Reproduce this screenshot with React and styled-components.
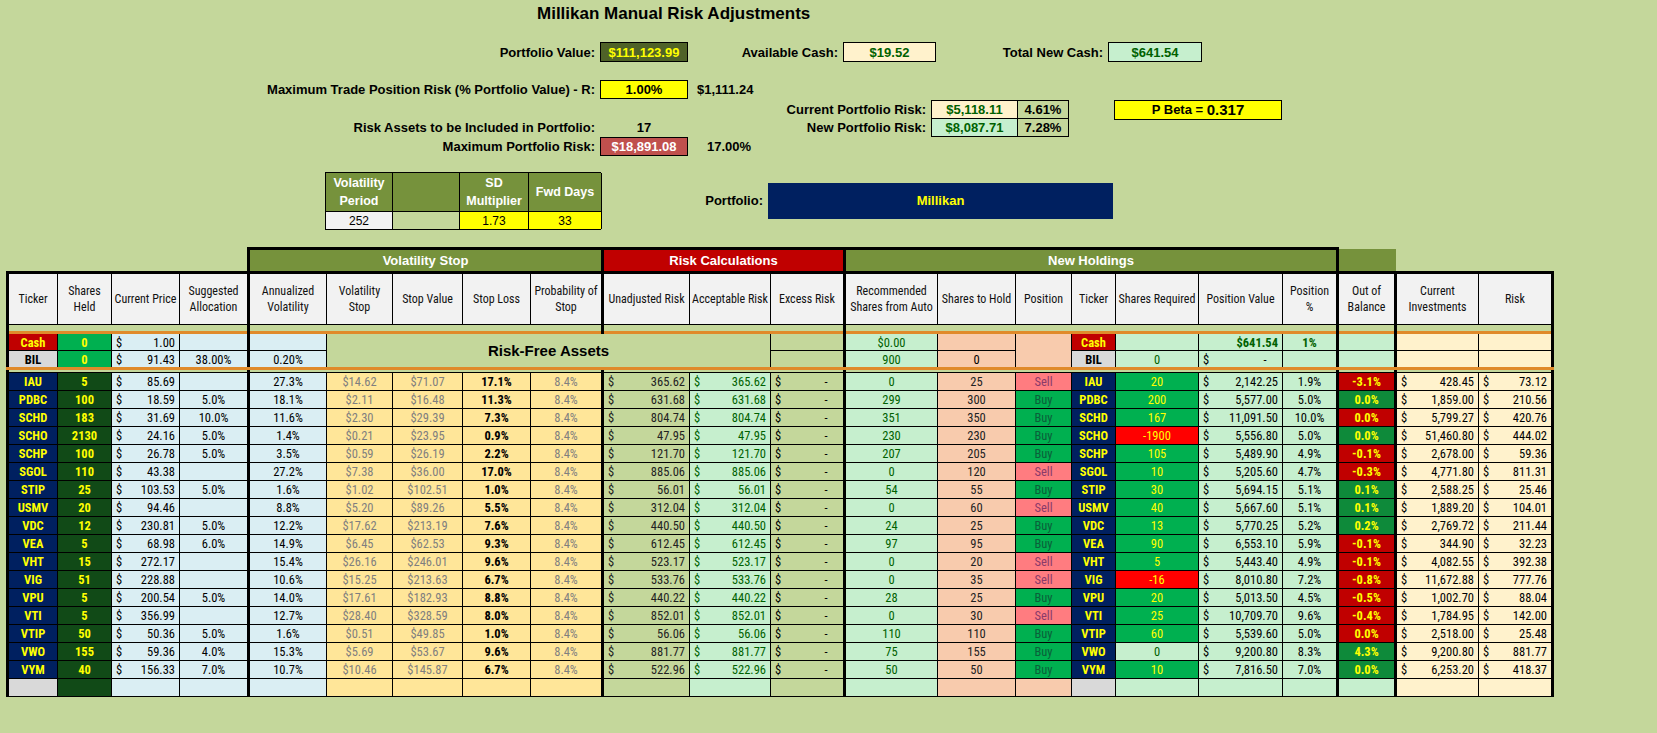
import React from "react";
import styled, { createGlobalStyle } from "styled-components";

const Global = createGlobalStyle`
  html, body { margin: 0; padding: 0; background: #c4d79b; }
  body { font-family: "Liberation Sans", Arial, sans-serif; }
`;

const Page = styled.div`
  width: 1657px;
  height: 733px;
  overflow: hidden;
  background: #c4d79b;
`;

const Title = styled.div`
  height: 28px;
  padding-left: 537px;
  display: flex;
  align-items: center;
  font-weight: bold;
  font-size: 17px;
  color: #000;
`;

const Row = styled.div`
  display: flex;
  align-items: center;
  height: ${(p) => p.$h || 19}px;
  margin-top: ${(p) => p.$mt || 0}px;
`;

const Label = styled.div`
  width: ${(p) => p.$w}px;
  flex: none;
  text-align: right;
  padding-right: 5px;
  box-sizing: border-box;
  font-weight: bold;
  font-size: 13px;
  white-space: nowrap;
`;

const Box = styled.div`
  width: ${(p) => p.$w}px;
  height: ${(p) => p.$h || 19}px;
  flex: none;
  box-sizing: border-box;
  border: ${(p) => (p.$noborder ? "none" : "1px solid #000")};
  background: ${(p) => p.$bg || "transparent"};
  color: ${(p) => p.$c || "#000"};
  display: flex;
  align-items: center;
  justify-content: center;
  font-weight: bold;
  font-size: ${(p) => p.$fs || 13}px;
  margin-left: ${(p) => p.$ml || 0}px;
`;

const Plain = styled.div`
  font-weight: bold;
  font-size: 13px;
  padding-left: ${(p) => p.$pl || 0}px;
`;

const Spacer = styled.div`
  width: ${(p) => p.$w}px;
  flex: none;
`;

const Stack = styled.div`
  display: flex;
  flex-direction: column;
`;

const VolGrid = styled.div`
  display: grid;
  grid-template-columns: 67px 67px 69px 73px;
  grid-template-rows: 39px 17px;
  width: 276px;
  box-sizing: border-box;
  border: 1px solid #000;
  align-self: flex-start;
`;

const VolHead = styled.div`
  background: #76923c;
  color: #fff;
  font-weight: bold;
  font-size: 12.5px;
  display: flex;
  align-items: center;
  justify-content: center;
  text-align: center;
  line-height: 18px;
  border-right: 1px solid #000;
  border-bottom: 1px solid #000;
`;

const VolVal = styled.div`
  background: ${(p) => p.$bg};
  font-size: 12px;
  display: flex;
  align-items: center;
  justify-content: center;
  border-right: 1px solid #000;
`;

const Navy = styled.div`
  width: 345px;
  height: 36px;
  background: #002060;
  color: #ffff00;
  font-weight: bold;
  font-size: 13px;
  display: flex;
  align-items: center;
  justify-content: center;
  align-self: flex-start;
  margin-top: 1px;
`;

const Table = styled.table`
  border-collapse: collapse;
  table-layout: fixed;
  margin-left: 6px;
  margin-top: 18px;
  font-family: "Liberation Sans Narrow", "Roboto Condensed", "Liberation Sans", sans-serif;
  font-size: 12.5px;
`;

const GroupTh = styled.th`
  height: 21px;
  padding: 0;
  background: ${(p) => p.$bg || "transparent"};
  color: #fff;
  font-family: "Liberation Sans", Arial, sans-serif;
  font-size: 13px;
  font-weight: bold;
  border-top: ${(p) => (p.$top ? "3px solid #000" : "none")};
  border-left: ${(p) => (p.$tl ? "3px solid #000" : "none")};
  border-right: ${(p) => (p.$tr ? "3px solid #000" : "none")};
`;

const HeadTh = styled.th`
  height: 50px;
  padding: 0 2px;
  background: #f2f2f2;
  font-weight: normal;
  font-size: 12px;
  line-height: 16px;
  color: #111;
  border: 1px solid #000;
  border-top: 3px solid #000;
  border-left: ${(p) => (p.$tl ? "3px solid #000" : "1px solid #000")};
  border-right: ${(p) => (p.$tr ? "3px solid #000" : "1px solid #000")};
`;

const Tr = styled.tr`
  height: ${(p) => p.$h}px;
`;

const Td = styled.td`
  padding: 0 4px;
  height: ${(p) => (p.$nb ? "auto" : "16px")};
  background: ${(p) => p.$bg || "transparent"};
  color: ${(p) => p.$c || "#000"};
  font-weight: ${(p) => (p.$b ? "bold" : "normal")};
  font-size: ${(p) => p.$fs || 12.5}px;
  text-align: ${(p) => p.$al || "center"};
  white-space: nowrap;
  border: ${(p) => (p.$nb ? "none" : "1px solid #000")};
  border-left: ${(p) => (p.$tl ? "3px solid #000" : p.$nb ? "none" : "1px solid #000")};
  border-right: ${(p) => (p.$tr ? "3px solid #000" : p.$nb ? "none" : "1px solid #000")};
  border-top: ${(p) => (p.$ot ? "3px solid #e08a2a" : p.$nb ? "none" : "1px solid #000")};
  border-bottom: ${(p) => (p.$ob ? "3px solid #e08a2a" : p.$nb ? "none" : "1px solid #000")};
  line-height: 15px;
`;

const Money = styled.span`
  display: flex;
  justify-content: space-between;
`;

const widths = [50, 54, 68, 69, 78, 66, 70, 68, 72, 87, 81, 74, 93, 78, 56, 44, 83, 84, 55, 58, 83, 74];
const thickLeft = new Set([0, 4, 9, 12, 19, 20]);

const headers = [
  "Ticker", "Shares Held", "Current Price", "Suggested Allocation", "Annualized Volatility",
  "Volatility Stop", "Stop Value", "Stop Loss", "Probability of Stop", "Unadjusted Risk",
  "Acceptable Risk", "Excess Risk", "Recommended Shares from Auto", "Shares to Hold", "Position",
  "Ticker", "Shares Required", "Position Value", "Position %", "Out of Balance",
  "Current Investments", "Risk",
];

const C = {
  navy: "#002060", yel: "#ffff00", dk: "#114a17", blue: "#daeef3", peach: "#ffe699",
  olive: "#c4d79b", lg: "#c6efce", dg: "#006100", sh: "#f8cbad", buy: "#00b050",
  sell: "#ff7c80", red: "#ff0000", dred: "#c00000", ok: "#0e8a3a", ly: "#fff2cc",
};

const data = [
  ["IAU", "5", "85.69", "", "27.3%", "$14.62", "$71.07", "17.1%", "365.62", "0", "25", "Sell", "20", "2,142.25", "1.9%", "-3.1%", "428.45", "73.12"],
  ["PDBC", "100", "18.59", "5.0%", "18.1%", "$2.11", "$16.48", "11.3%", "631.68", "299", "300", "Buy", "200", "5,577.00", "5.0%", "0.0%", "1,859.00", "210.56"],
  ["SCHD", "183", "31.69", "10.0%", "11.6%", "$2.30", "$29.39", "7.3%", "804.74", "351", "350", "Buy", "167", "11,091.50", "10.0%", "0.0%n", "5,799.27", "420.76"],
  ["SCHO", "2130", "24.16", "5.0%", "1.4%", "$0.21", "$23.95", "0.9%", "47.95", "230", "230", "Buy", "-1900", "5,556.80", "5.0%", "0.0%", "51,460.80", "444.02"],
  ["SCHP", "100", "26.78", "5.0%", "3.5%", "$0.59", "$26.19", "2.2%", "121.70", "207", "205", "Buy", "105", "5,489.90", "4.9%", "-0.1%", "2,678.00", "59.36"],
  ["SGOL", "110", "43.38", "", "27.2%", "$7.38", "$36.00", "17.0%", "885.06", "0", "120", "Sell", "10", "5,205.60", "4.7%", "-0.3%", "4,771.80", "811.31"],
  ["STIP", "25", "103.53", "5.0%", "1.6%", "$1.02", "$102.51", "1.0%", "56.01", "54", "55", "Buy", "30", "5,694.15", "5.1%", "0.1%", "2,588.25", "25.46"],
  ["USMV", "20", "94.46", "", "8.8%", "$5.20", "$89.26", "5.5%", "312.04", "0", "60", "Sell", "40", "5,667.60", "5.1%", "0.1%", "1,889.20", "104.01"],
  ["VDC", "12", "230.81", "5.0%", "12.2%", "$17.62", "$213.19", "7.6%", "440.50", "24", "25", "Buy", "13", "5,770.25", "5.2%", "0.2%", "2,769.72", "211.44"],
  ["VEA", "5", "68.98", "6.0%", "14.9%", "$6.45", "$62.53", "9.3%", "612.45", "97", "95", "Buy", "90", "6,553.10", "5.9%", "-0.1%", "344.90", "32.23"],
  ["VHT", "15", "272.17", "", "15.4%", "$26.16", "$246.01", "9.6%", "523.17", "0", "20", "Sell", "5", "5,443.40", "4.9%", "-0.1%", "4,082.55", "392.38"],
  ["VIG", "51", "228.88", "", "10.6%", "$15.25", "$213.63", "6.7%", "533.76", "0", "35", "Sell", "-16", "8,010.80", "7.2%", "-0.8%", "11,672.88", "777.76"],
  ["VPU", "5", "200.54", "5.0%", "14.0%", "$17.61", "$182.93", "8.8%", "440.22", "28", "25", "Buy", "20", "5,013.50", "4.5%", "-0.5%", "1,002.70", "88.04"],
  ["VTI", "5", "356.99", "", "12.7%", "$28.40", "$328.59", "8.0%", "852.01", "0", "30", "Sell", "25", "10,709.70", "9.6%", "-0.4%", "1,784.95", "142.00"],
  ["VTIP", "50", "50.36", "5.0%", "1.6%", "$0.51", "$49.85", "1.0%", "56.06", "110", "110", "Buy", "60", "5,539.60", "5.0%", "0.0%n", "2,518.00", "25.48"],
  ["VWO", "155", "59.36", "4.0%", "15.3%", "$5.69", "$53.67", "9.6%", "881.77", "75", "155", "Buy", "0", "9,200.80", "8.3%", "4.3%", "9,200.80", "881.77"],
  ["VYM", "40", "156.33", "7.0%", "10.7%", "$10.46", "$145.87", "6.7%", "522.96", "50", "50", "Buy", "10", "7,816.50", "7.0%", "0.0%", "6,253.20", "418.37"],
];

const M = ({ v }) => (
  <Money>
    <span>$</span>
    <span>{v}</span>
  </Money>
);

const Dash = () => (
  <Money>
    <span>$</span>
    <span>-&nbsp;&nbsp;&nbsp;&nbsp;</span>
  </Money>
);

function DataRow({ r }) {
  const [t, sh, pr, sa, av, vs, sv, sl, un, rec, hold, pos, req, pv, pp, oob, ci, rk] = r;
  const neg = oob.startsWith("-") || oob.endsWith("n");
  const oobText = oob.replace("n", "");
  const reqNeg = req.startsWith("-");
  const reqZero = req === "0";
  return (
    <Tr $h={18}>
      <Td $tl $bg={C.navy} $c={C.yel} $b>{t}</Td>
      <Td $bg={C.dk} $c={C.yel} $b>{sh}</Td>
      <Td $bg={C.blue} $al="left"><M v={pr} /></Td>
      <Td $bg={C.blue}>{sa}</Td>
      <Td $tl $bg={C.blue}>{av}</Td>
      <Td $bg={C.peach} $c="#7f7f7f">{vs}</Td>
      <Td $bg={C.peach} $c="#7f7f7f">{sv}</Td>
      <Td $bg={C.peach} $b>{sl}</Td>
      <Td $bg={C.peach} $c="#7f7f7f">8.4%</Td>
      <Td $tl $bg={C.olive} $c="#222"><M v={un} /></Td>
      <Td $bg={C.lg} $c={C.dg}><M v={un} /></Td>
      <Td $bg={C.olive}><Dash /></Td>
      <Td $tl $bg={C.lg} $c={C.dg}>{rec}</Td>
      <Td $bg={C.sh} $c="#222">{hold}</Td>
      <Td $bg={pos === "Buy" ? C.buy : C.sell} $c={pos === "Buy" ? "#0b5f3a" : "#8a3a6a"}>{pos}</Td>
      <Td $bg={C.navy} $c={C.yel} $b>{t}</Td>
      <Td $bg={reqNeg ? C.red : reqZero ? C.lg : C.buy} $c={reqZero ? C.dg : C.yel}>{req}</Td>
      <Td $bg={C.lg}><M v={pv} /></Td>
      <Td $bg={C.lg}>{pp}</Td>
      <Td $tl $bg={neg ? C.dred : C.ok} $c={C.yel} $b>{oobText}</Td>
      <Td $tl $bg={C.ly}><M v={ci} /></Td>
      <Td $tr $bg={C.ly}><M v={rk} /></Td>
    </Tr>
  );
}

const GapRow = ({ h }) => (
  <Tr $h={h}>
    <Td $nb $tl colSpan={4} />
    <Td $nb $tl colSpan={5} />
    <Td $nb $tl colSpan={3} />
    <Td $nb $tl colSpan={7} />
    <Td $nb $tl />
    <Td $nb $tl colSpan={2} $tr />
  </Tr>
);

export default function App() {
  return (
    <Page>
      <Global />
      <Title>Millikan Manual Risk Adjustments</Title>
      <Row $h={20} $mt={14}>
        <Label $w={600}>Portfolio Value:</Label>
        <Box $w={88} $h={20} $bg="#4f6228" $c="#ffff00">$111,123.99</Box>
        <Label $w={155}>Available Cash:</Label>
        <Box $w={93} $h={20} $bg="#fff2cc" $c="#006100">$19.52</Box>
        <Label $w={172}>Total New Cash:</Label>
        <Box $w={94} $h={20} $bg="#c6efce" $c="#006100">$641.54</Box>
      </Row>
      <Row $h={19} $mt={18}>
        <Label $w={600}>Maximum Trade Position Risk (% Portfolio Value) - R:</Label>
        <Box $w={88} $bg="#ffff00">1.00%</Box>
        <Plain $pl={9}>$1,111.24</Plain>
      </Row>
      <Row $h={19} $mt={1}>
        <Spacer $w={688} />
        <Label $w={243}>Current Portfolio Risk:</Label>
        <Box $w={87} $bg="#fff2cc" $c="#006100">$5,118.11</Box>
        <Box $w={52} $ml={-1}>4.61%</Box>
        <Box $w={168} $ml={45} $h={20} $bg="#ffff00">
          P Beta =&nbsp;<span style={{ fontSize: 15 }}>0.317</span>
        </Box>
      </Row>
      <Row $h={19} $mt={-1}>
        <Label $w={600}>Risk Assets to be Included in Portfolio:</Label>
        <Box $w={88} $noborder>17</Box>
        <Label $w={243}>New Portfolio Risk:</Label>
        <Box $w={87} $bg="#c6efce" $c="#006100">$8,087.71</Box>
        <Box $w={52} $ml={-1}>7.28%</Box>
      </Row>
      <Row $h={19}>
        <Label $w={600}>Maximum Portfolio Risk:</Label>
        <Box $w={88} $bg="#c0504d" $c="#fff">$18,891.08</Box>
        <Plain $pl={19}>17.00%</Plain>
      </Row>
      <Row $h={57} $mt={16}>
        <Spacer $w={325} />
        <VolGrid>
          <VolHead>Volatility<br />Period</VolHead>
          <VolHead />
          <VolHead>SD<br />Multiplier</VolHead>
          <VolHead>Fwd Days</VolHead>
          <VolVal $bg="#f2f2f2">252</VolVal>
          <VolVal $bg="#c4d79b" />
          <VolVal $bg="#ffff00">1.73</VolVal>
          <VolVal $bg="#ffff00">33</VolVal>
        </VolGrid>
        <Stack>
          <Row $h={38}>
            <Label $w={167}>Portfolio:</Label>
            <Navy>Millikan</Navy>
          </Row>
        </Stack>
      </Row>
      <Table>
        <colgroup>
          {widths.map((w, i) => (
            <col key={i} style={{ width: w }} />
          ))}
        </colgroup>
        <thead>
          <tr>
            <GroupTh colSpan={4} />
            <GroupTh colSpan={5} $bg="#76923c" $top $tl>Volatility Stop</GroupTh>
            <GroupTh colSpan={3} $bg="#c00000" $top $tl>Risk Calculations</GroupTh>
            <GroupTh colSpan={7} $bg="#76923c" $top $tl $tr>New Holdings</GroupTh>
            <GroupTh $bg="#76923c" />
            <GroupTh colSpan={2} />
          </tr>
          <tr>
            {headers.map((h, i) => (
              <HeadTh key={i} $tl={thickLeft.has(i)} $tr={i === 21}>{h}</HeadTh>
            ))}
          </tr>
        </thead>
        <tbody>
          <GapRow h={8} />
          <Tr $h={18}>
            <Td $tl $ot $bg={C.dred} $c={C.yel} $b>Cash</Td>
            <Td $ot $bg={C.buy} $c={C.yel} $b>0</Td>
            <Td $ot $bg={C.blue} $al="left"><M v="1.00" /></Td>
            <Td $ot $bg={C.blue} />
            <Td $tl $ot $bg={C.blue} />
            <Td $ot $bg={C.olive} colSpan={6} rowSpan={2} $b $fs={15}
              style={{ fontFamily: '"Liberation Sans", Arial, sans-serif', borderBottom: "3px solid #e08a2a", borderLeft: "1px solid #000" }}>
              Risk-Free Assets
            </Td>
            <Td $ot $bg={C.olive} />
            <Td $tl $ot $bg={C.lg} $c={C.dg}>$0.00</Td>
            <Td $ot $bg={C.sh} />
            <Td $ot $ob $bg={C.sh} rowSpan={2} />
            <Td $ot $bg={C.dred} $c={C.yel} $b>Cash</Td>
            <Td $ot $bg={C.lg} />
            <Td $ot $bg={C.lg} $c={C.dg} $b $al="right">$641.54</Td>
            <Td $ot $bg={C.lg} $c={C.dg} $b>1%</Td>
            <Td $tl $ot $bg={C.lg} />
            <Td $tl $ot $bg={C.ly} />
            <Td $tr $ot $bg={C.ly} />
          </Tr>
          <Tr $h={18}>
            <Td $tl $ob $bg="#d9d9d9" $b>BIL</Td>
            <Td $ob $bg={C.buy} $c={C.yel} $b>0</Td>
            <Td $ob $bg={C.blue} $al="left"><M v="91.43" /></Td>
            <Td $ob $bg={C.blue}>38.00%</Td>
            <Td $tl $ob $bg={C.blue}>0.20%</Td>
            <Td $ob $bg={C.olive} />
            <Td $tl $ob $bg={C.lg} $c={C.dg}>900</Td>
            <Td $ob $bg={C.sh}>0</Td>
            <Td $ob $bg="#d9d9d9" $b>BIL</Td>
            <Td $ob $bg={C.lg} $c={C.dg}>0</Td>
            <Td $ob $bg={C.lg}><Dash /></Td>
            <Td $ob $bg={C.lg} />
            <Td $tl $ob $bg={C.lg} />
            <Td $tl $ob $bg={C.ly} />
            <Td $tr $ob $bg={C.ly} />
          </Tr>
          <GapRow h={4} />
          {data.map((r) => (
            <DataRow key={r[0]} r={r} />
          ))}
          <Tr $h={18}>
            <Td $tl $bg="#d9d9d9" />
            <Td $bg={C.dk} />
            <Td $bg={C.blue} />
            <Td $bg={C.blue} />
            <Td $tl $bg={C.blue} />
            <Td $bg={C.peach} />
            <Td $bg={C.peach} />
            <Td $bg={C.peach} />
            <Td $bg={C.peach} />
            <Td $tl $bg={C.olive} />
            <Td $bg={C.lg} />
            <Td $bg={C.olive} />
            <Td $tl $bg={C.lg} />
            <Td $bg={C.sh} />
            <Td $bg={C.sh} />
            <Td $bg="#d9d9d9" />
            <Td $bg={C.lg} />
            <Td $bg={C.lg} />
            <Td $bg={C.lg} />
            <Td $tl $bg={C.lg} />
            <Td $tl $bg={C.ly} />
            <Td $tr $bg={C.ly} />
          </Tr>
        </tbody>
      </Table>
    </Page>
  );
}
